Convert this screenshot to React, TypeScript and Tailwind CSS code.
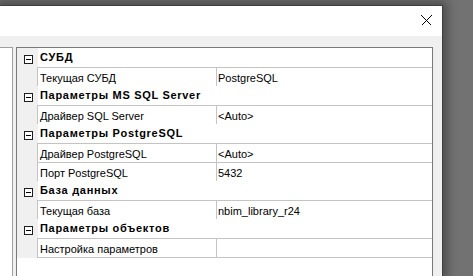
import React from "react";

type Row =
  | { kind: "cat"; label: string }
  | { kind: "prop"; label: string; value: string; last?: boolean };

const rows: Row[] = [
  { kind: "cat", label: "СУБД" },
  { kind: "prop", label: "Текущая СУБД", value: "PostgreSQL" },
  { kind: "cat", label: "Параметры MS SQL Server" },
  { kind: "prop", label: "Драйвер SQL Server", value: "<Auto>" },
  { kind: "cat", label: "Параметры PostgreSQL" },
  { kind: "prop", label: "Драйвер PostgreSQL", value: "<Auto>" },
  { kind: "prop", label: "Порт PostgreSQL", value: "5432" },
  { kind: "cat", label: "База данных" },
  { kind: "prop", label: "Текущая база", value: "nbim_library_r24" },
  { kind: "cat", label: "Параметры объектов" },
  { kind: "prop", label: "Настройка параметров", value: "", last: true },
];

function MinusBox() {
  return (
    <svg width="9" height="9" viewBox="0 0 9 9" shapeRendering="crispEdges">
      <rect x="0.5" y="0.5" width="8" height="8" fill="#fff" stroke="#1e1e1e" />
      <rect x="2" y="4" width="5" height="1" fill="#000" />
    </svg>
  );
}

function CatRow({ label }: { label: string }) {
  return (
    <div className="flex h-[19px]">
      <div className="w-[21px] shrink-0 bg-[#f0f0f0] pl-[7px] pt-[7px]">
        <MinusBox />
      </div>
      <div className="flex-1 bg-white pl-[2px] pt-[3px] text-[11px] font-bold leading-[13px] tracking-[0.7px] text-black">
        {label}
      </div>
    </div>
  );
}

function PropRow({ label, value, last }: { label: string; value: string; last?: boolean }) {
  return (
    <div className={"flex " + (last ? "h-[20px]" : "h-[19px]")}>
      <div className="w-[20px] shrink-0 bg-[#f0f0f0]" />
      <div
        className={
          "flex flex-1 border-l border-t border-[#c4c4c4] bg-white " + (last ? "border-b" : "")
        }
      >
        <div className="w-[179px] shrink-0 border-r border-[#c4c4c4] pl-[2px] pt-[4px] text-[11px] leading-[13px] text-black">
          {label}
        </div>
        <div className="flex-1 pl-[1px] pt-[4px] text-[11px] leading-[13px] text-black">{value}</div>
      </div>
    </div>
  );
}

export default function App() {
  return (
    <div
      className="flex h-[276px] w-[473px] overflow-hidden bg-[#727272]"
      style={{ fontFamily: '"Liberation Sans", Arial, sans-serif' }}
    >
      <div className="mt-[5px] flex h-[271px] w-[443px] shrink-0 flex-col border-r border-t border-[#3f3f3f] bg-[#f0f0f0] shadow-[0_0_10px_4px_rgba(0,0,0,0.35)]">
        {/* title bar */}
        <div className="flex h-[30px] shrink-0 items-center justify-end bg-white pr-[10px]">
          <svg width="11" height="11" viewBox="0 0 11 11" shapeRendering="crispEdges" className="mt-[-2px]">
            <path d="M0.5 0.5 L10.5 10.5 M10.5 0.5 L0.5 10.5" stroke="#000" strokeWidth="1" />
          </svg>
        </div>
        {/* body */}
        <div className="flex flex-1 pr-[9px] pt-[11px]">
          <div className="w-[13px] shrink-0 border-r border-t border-[#a0a0a0] bg-white" />
          <div className="ml-[3px] flex-1 border-l border-r border-t border-[#7a7a7a] bg-white">
            {rows.map((r, i) =>
              r.kind === "cat" ? (
                <CatRow key={i} label={r.label} />
              ) : (
                <PropRow key={i} label={r.label} value={r.value} last={r.last} />
              )
            )}
          </div>
        </div>
      </div>
      <div className="flex-1" />
    </div>
  );
}
